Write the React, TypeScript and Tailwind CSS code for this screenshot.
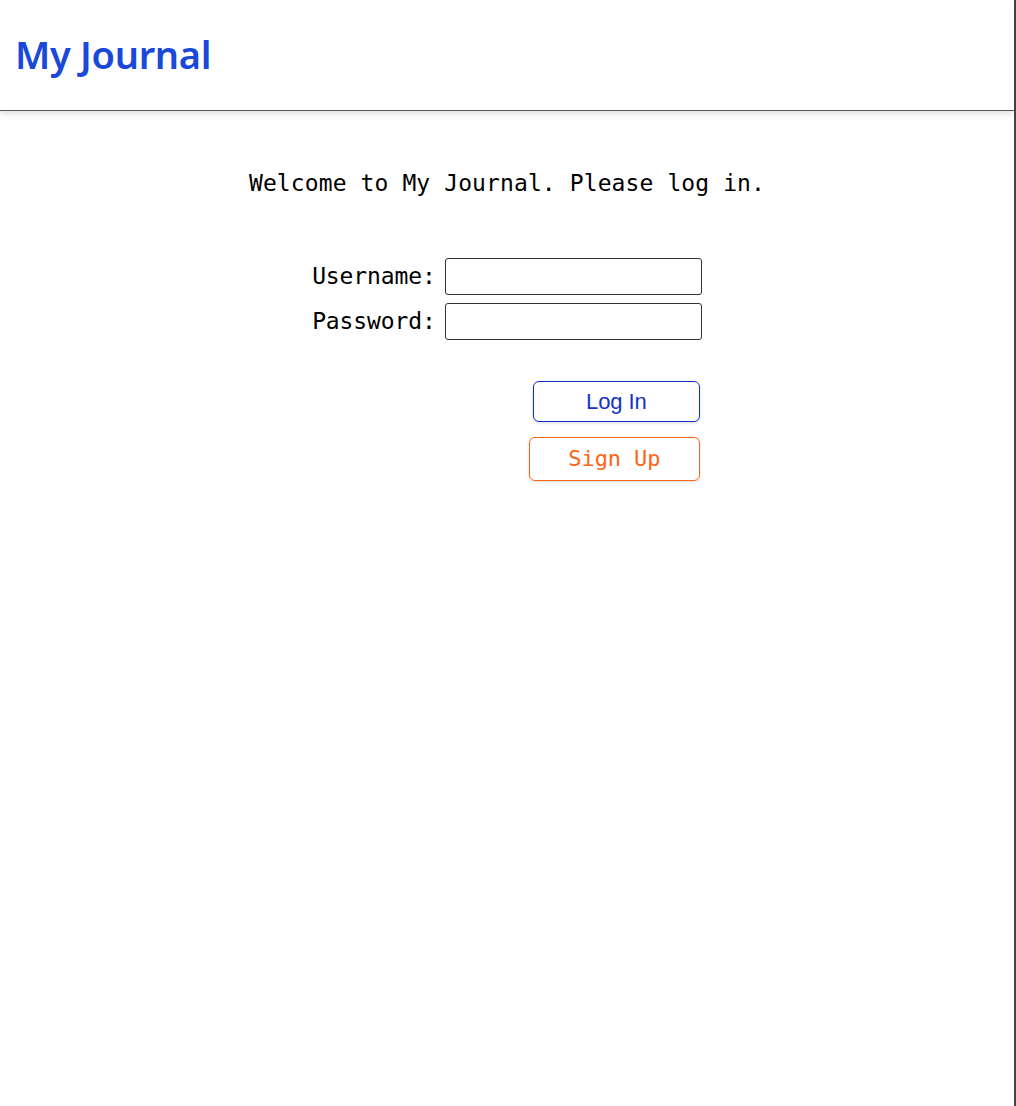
import React from "react";

export default function App() {
  return (
    <div className="min-h-screen h-[1106px] w-full border-r-2 border-[#444] bg-white">
      <header className="h-[111px] border-b border-[#555] shadow-[0_3px_6px_rgba(0,0,0,0.12)] flex items-center px-[15px]">
        <h1 className="mt-[-2px] text-[38px] font-semibold tracking-[-0.3px] text-[#1a48d8] [font-family:'Noto_Sans',sans-serif]">
          My Journal
        </h1>
      </header>
      <main className="flex flex-col items-center [font-family:'DejaVu_Sans_Mono',monospace]">
        <p className="mt-[55px] text-[23px] text-black tracking-[0.1px]">
          Welcome to My Journal. Please log in.
        </p>
        <div className="mt-[57px] grid grid-cols-[auto_257px] gap-x-[9px] gap-y-[8px] items-center text-[23px] text-black tracking-[-0.1px]">
          <label className="text-right">Username:</label>
          <input className="h-[37px] rounded-[3px] border border-[#333] bg-white" />
          <label className="text-right">Password:</label>
          <input type="password" className="h-[37px] rounded-[3px] border border-[#333] bg-white" />
          <div />
          <div className="mt-[33px] flex flex-col items-end gap-[15px]">
            <button className="mr-[2px] h-[41px] w-[167px] rounded-[6px] border-[1.5px] border-[#0f2ecb] text-[22px] text-[#1533c8] shadow-[0_1px_3px_rgba(0,0,0,0.15)] [font-family:'Liberation_Sans',sans-serif]">
              Log In
            </button>
            <button className="mr-[2px] h-[44px] w-[171px] rounded-[6px] border-[1.5px] border-[#ff6414] text-[22px] text-[#ff6414] shadow-[0_1px_3px_rgba(0,0,0,0.15)] [font-family:'DejaVu_Sans_Mono',monospace]">
              Sign Up
            </button>
          </div>
        </div>
      </main>
    </div>
  );
}
